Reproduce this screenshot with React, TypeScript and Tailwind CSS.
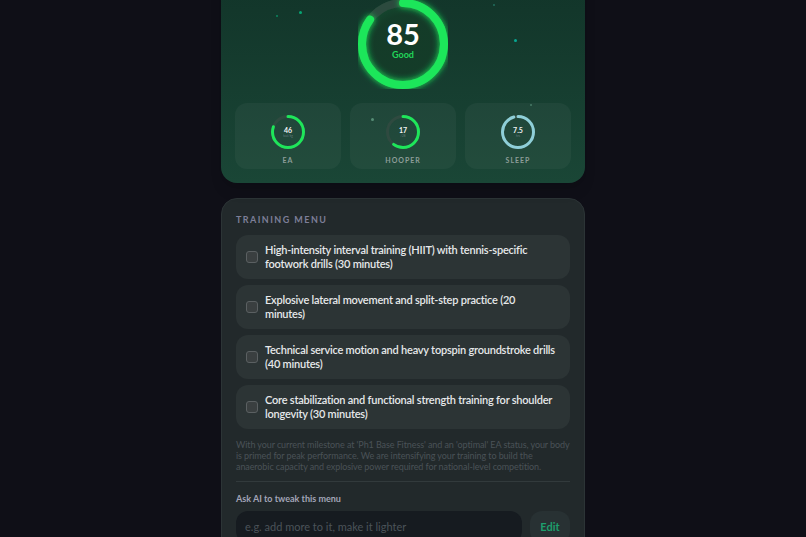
import React from "react";

const menu = [
  "High-intensity interval training (HIIT) with tennis-specific footwork drills (30 minutes)",
  "Explosive lateral movement and split-step practice (20 minutes)",
  "Technical service motion and heavy topspin groundstroke drills (40 minutes)",
  "Core stabilization and functional strength training for shoulder longevity (30 minutes)",
];

const dots = [
  { x: 55, y: 15, s: 2, c: "bg-emerald-400/50" },
  { x: 78, y: 11, s: 3, c: "bg-emerald-400/70" },
  { x: 293, y: 39, s: 3, c: "bg-teal-400/70" },
  { x: 272, y: 4, s: 2, c: "bg-teal-300/30" },
  { x: 150, y: 118, s: 3, c: "bg-emerald-200/40" },
  { x: 309, y: 104, s: 2, c: "bg-emerald-200/30" },
];

function Ring({
  size,
  stroke,
  pct,
  color,
  track,
  glow,
}: {
  size: number;
  stroke: number;
  pct: number;
  color: string;
  track: string;
  glow?: boolean;
}) {
  const r = (size - stroke) / 2;
  const c = 2 * Math.PI * r;
  return (
    <svg width={size} height={size} className="absolute inset-0 -rotate-90">
      {glow && (
        <defs>
          <filter id="g" x="-30%" y="-30%" width="160%" height="160%">
            <feGaussianBlur stdDeviation="3" result="b" />
            <feMerge>
              <feMergeNode in="b" />
              <feMergeNode in="SourceGraphic" />
            </feMerge>
          </filter>
        </defs>
      )}
      <circle cx={size / 2} cy={size / 2} r={r} fill="none" stroke={track} strokeWidth={stroke} />
      <circle
        cx={size / 2}
        cy={size / 2}
        r={r}
        fill="none"
        stroke={color}
        strokeWidth={stroke}
        strokeLinecap="round"
        strokeDasharray={`${c * pct} ${c}`}
        filter={glow ? "url(#g)" : undefined}
      />
    </svg>
  );
}

function Stat({ value, unit, label, pct, color }: { value: string; unit: string; label: string; pct: number; color: string }) {
  return (
    <div className="flex h-[66px] flex-1 flex-col items-center rounded-xl bg-white/[0.04] pt-[12px]">
      <div className="relative flex h-[34px] w-[34px] flex-col items-center justify-center">
        <Ring size={34} stroke={3} pct={pct} color={color} track="#2f4a40" />
        <span className="text-[7px] font-bold leading-none text-gray-100">{value}</span>
        <span className="mt-[1px] text-[3px] leading-none text-gray-400/60">{unit}</span>
      </div>
      <span className="mt-[6px] text-[7px] font-bold tracking-[0.14em] text-[#8e9e99]">{label}</span>
    </div>
  );
}

export default function App() {
  return (
    <div
      className="min-h-screen overflow-hidden bg-[#0f0f17]"
      style={{ fontFamily: "Lato, 'Noto Sans', sans-serif" }}
    >
      <div className="mx-auto -mt-[38px] flex w-[364px] flex-col gap-[15px]">
        <section className="relative rounded-2xl bg-gradient-to-b from-[#113328] to-[#1a4636] px-[14px] pb-[14px] pt-[37px] shadow-lg">
          {dots.map((d, i) => (
            <span
              key={i}
              className={`absolute rounded-full ${d.c}`}
              style={{ left: d.x, top: d.y + 38, width: d.s, height: d.s }}
            />
          ))}
          <div className="flex justify-center">
            <div className="relative flex h-[90px] w-[90px] flex-col items-center justify-center rounded-full bg-[radial-gradient(circle,rgba(20,60,40,0.9)_45%,rgba(34,224,90,0.12)_70%,transparent_80%)] pb-[8px]">
              <Ring size={90} stroke={8} pct={0.85} color="#1ee65a" track="#2c4a3e" glow />
              <span className="text-[29px] font-bold leading-[28px] text-white">85</span>
              <span className="mt-[2px] text-[9px] font-bold leading-[10px] text-[#22d65a]">Good</span>
            </div>
          </div>
          <div className="mt-[14px] flex gap-[9px]">
            <Stat value="46" unit="kcal/kg" label="EA" pct={0.8} color="#1ee65a" />
            <Stat value="17" unit="/28" label="HOOPER" pct={0.6} color="#1ee65a" />
            <Stat value="7.5" unit="hrs" label="SLEEP" pct={0.95} color="#8ecfd8" />
          </div>
        </section>

        <section className="rounded-2xl border border-[#2c3436] bg-[#22292b] px-[14px] pb-6 pt-[14px]">
          <h2 className="text-[9px] font-bold tracking-[0.16em] text-[#7d7f98]">TRAINING MENU</h2>
          <div className="mt-[8px] flex flex-col gap-[6px]">
            {menu.map((m) => (
              <label
                key={m}
                className="flex min-h-[44px] items-center gap-[7px] rounded-xl bg-[#2c3435] py-[7px] pl-[10px] pr-[13px]"
              >
                <span className="h-[12px] w-[12px] shrink-0 rounded-[3px] border border-[#5b6062] bg-[#3a3f40]" />
                <span className="text-[11px] font-semibold leading-[14px] tracking-[-0.02em] text-[#e6e8ea]">{m}</span>
              </label>
            ))}
          </div>
          <p className="mt-[10px] text-[9px] leading-[11px] tracking-[-0.01em] text-[#4a5257]">
            With your current milestone at 'Ph1 Base Fitness' and an 'optimal' EA status, your body is primed for peak
            performance. We are intensifying your training to build the anaerobic capacity and explosive power required for
            national-level competition.
          </p>
          <div className="mt-[9px] h-px bg-[#323a3c]" />
          <p className="mt-[10px] text-[9px] font-bold text-[#a3a5b8]">Ask AI to tweak this menu</p>
          <div className="mt-[6px] flex gap-[8px]">
            <div className="flex h-[32px] flex-1 items-center rounded-xl bg-[#161b20] px-[9px] text-[11px] text-[#4b5359]">
              e.g. add more to it, make it lighter
            </div>
            <button className="h-[32px] w-[40px] rounded-xl bg-[#283133] text-[11px] font-bold text-[#1d9e6c]">Edit</button>
          </div>
        </section>
      </div>
    </div>
  );
}
